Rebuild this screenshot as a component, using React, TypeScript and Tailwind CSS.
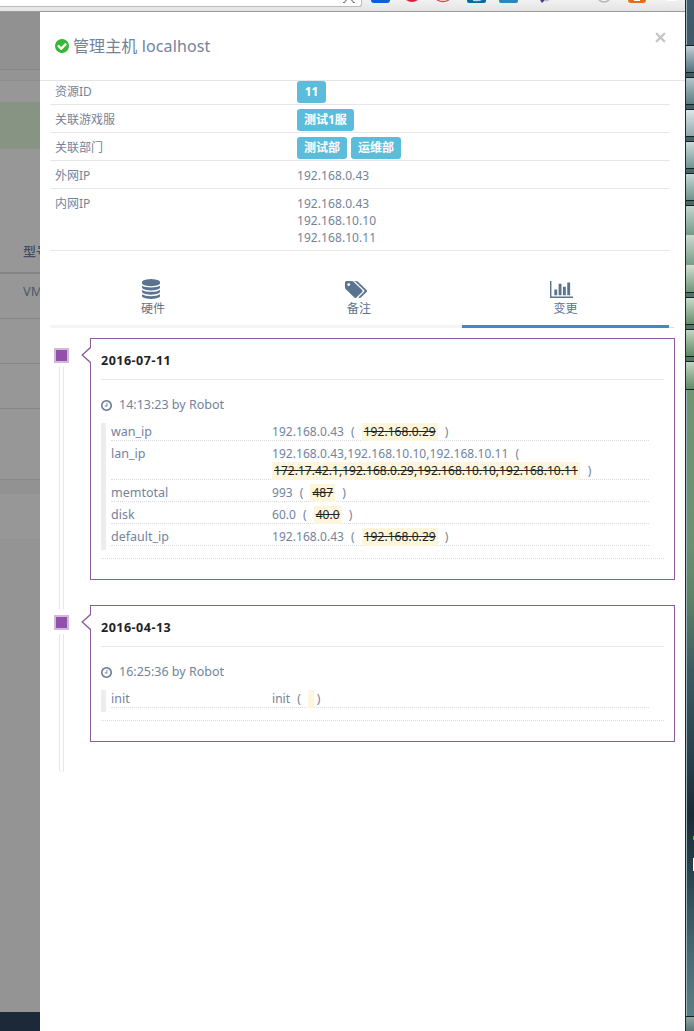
import type { ReactNode } from 'react';

const CIRCLE =
  'M1536 896q0 209-103 385.5t-279.5 279.5-385.5 103-385.5-103-279.5-279.5-103-385.5 103-385.5 279.5-279.5 385.5-103 385.5 103 279.5 279.5 103 385.5z';

function CheckIcon() {
  return (
    <svg viewBox="0 128 1536 1536" className="h-[14px] w-[14px] shrink-0 fill-[#35b935]">
      <path
        fillRule="evenodd"
        d={`${CIRCLE}M1284 734q0-28-18-46l-91-90q-19-19-45-19t-45 19l-408 407-226-226q-19-19-45-19t-45 19l-91 90q-18 18-18 46 0 27 18 45l362 362q19 19 45 19 27 0 46-19l543-543q18-18 18-45z`}
      />
    </svg>
  );
}

function ClockIcon() {
  return (
    <svg viewBox="0 128 1536 1536" className="-mt-px h-[11px] w-[11px] shrink-0 fill-[#6c7f95]">
      <path d="M896 544v448q0 14-9 23t-23 9h-320q-14 0-23-9t-9-23v-64q0-14 9-23t23-9h224v-352q0-14 9-23t23-9h64q14 0 23 9t9 23zm416 352q0-148-73-273t-198-198-273-73-273 73-198 198-73 273 73 273 198 198 273 73 273-73 198-198 73-273zm224 0q0 209-103 385.5t-279.5 279.5-385.5 103-385.5-103-279.5-279.5-103-385.5 103-385.5 279.5-279.5 385.5-103 385.5 103 279.5 279.5 103 385.5z" />
    </svg>
  );
}

const DISC = 'q237 0 443-43t325-127v170q0 69-103 128t-280 93.5-385 34.5-385-34.5-280-93.5-103-128v-170q119 84 325 127t443 43z';

function DatabaseIcon() {
  return (
    <svg viewBox="0 0 1536 1792" preserveAspectRatio="none" className="h-5 w-[18px] fill-[#5a738e]">
      <path
        d={`M768 768${DISC}M768 1536${DISC}M768 1152${DISC}M768 0q208 0 385 34.5t280 93.5 103 128v128q0 69-103 128t-280 93.5-385 34.5-385-34.5-280-93.5-103-128v-128q0-69 103-128t280-93.5 385-34.5z`}
      />
    </svg>
  );
}

function TagsIcon() {
  return (
    <svg viewBox="0 128 1899 1515" preserveAspectRatio="none" className="mr-[2px] h-[17px] w-[22px] fill-[#5a738e]">
      <path d="M448 448q0-53-37.5-90.5t-90.5-37.5-90.5 37.5-37.5 90.5 37.5 90.5 90.5 37.5 90.5-37.5 37.5-90.5zm1067 576q0 53-37 90l-491 492q-39 37-91 37-53 0-90-37l-715-716q-38-37-64.5-101t-26.5-117v-416q0-52 38-90t90-38h416q53 0 117 26.5t102 64.5l715 714q37 39 37 91zm384 0q0 53-37 90l-491 492q-39 37-91 37-36 0-59-14t-53-45l470-470q37-37 37-90 0-52-37-91l-715-714q-38-38-102-64.5t-117-26.5h224q53 0 117 26.5t102 64.5l715 714q37 39 37 91z" />
    </svg>
  );
}

function ChartIcon() {
  return (
    <svg viewBox="0 128 2048 1536" preserveAspectRatio="none" className="mr-[3px] h-[17px] w-[23px] fill-[#5a738e]">
      <path d="M640 896v512h-256v-512h256zm384-512v1024h-256v-1024h256zm1024 1152v128h-2048v-1536h128v1408h1920zm-640-896v768h-256v-768h256zm384-384v1152h-256v-1152h256z" />
    </svg>
  );
}

function Toolbar() {
  return (
    <div className="flex h-3 shrink-0 items-start border-b border-[#9b9b9b] bg-gradient-to-b from-[#f1f1f1] to-[#e4e4e4]">
      <div className="flex h-[7px] w-[362px] shrink-0 justify-end rounded-br-[3px] border-r border-b border-[#b9b9b9] bg-white pr-[5px]">
        <svg viewBox="0 0 14 3" className="h-[3px] w-[14px] fill-none stroke-[#777]">
          <path d="M1 2.5h2V1l2-1M9 0l2 1v1.500h2" />
        </svg>
      </div>
      <svg viewBox="362 0 323 5" className="h-[5px] w-[323px]">
        <path d="M371 0h19q0 3-3 3h-13q-3 0-3-3z" fill="#0b5fd8" />
        <path d="M406 0h12q-6 4-12 0z" fill="#dc1f35" />
        <path d="M437 0q6 3 12 0" fill="none" stroke="#e5484f" strokeWidth="1.3" />
        <path d="M467 0h19v1q0 2-2 2h-15q-2 0-2-2z" fill="#0b6aa0" />
        <path d="M473 0h9q-3 2-9 1z" fill="#a9dcf0" />
        <path d="M499 0h19v1q0 2-2 2h-15q-2 0-2-2z" fill="#2b86c4" />
        <path d="M540 0h5l-3 3z" fill="#4c3c88" />
        <path d="M545 0h5l-4 2z" fill="#bcbcc4" />
        <path d="M599 0q5 4 10 0" fill="none" stroke="#b5b5b5" strokeWidth="1.6" />
        <path d="M628 0h18q0 3-3 3h-12q-3 0-3-3z" fill="#f26a0e" />
        <path d="M634 0h6v1h-6z" fill="#fff" />
        <path d="M667 0h9v1h-9z" fill="#fff" />
      </svg>
    </div>
  );
}

function Backdrop() {
  return (
    <div className="flex w-10 shrink-0 flex-col overflow-hidden bg-[#979797] text-[13px] whitespace-nowrap text-[#505868]">
      <div className="h-[58px] shrink-0 border-b border-[#858585] bg-[#919191]" />
      <div className="h-[11px] shrink-0 border-b border-[#8c8c8c] bg-[#949494]" />
      <div className="h-[21px] shrink-0" />
      <div className="h-[47px] shrink-0 bg-[#889483]" />
      <div className="flex h-[125px] shrink-0 items-end border-b-2 border-[#858585] pb-3 pl-[23px] leading-[18px] font-medium text-[#434b5c]">型号</div>
      <div className="h-[45px] shrink-0 border-b border-[#858585] pt-2 pl-[23px] leading-[18px]">VM</div>
      <div className="h-[45px] shrink-0 border-b border-[#858585]" />
      <div className="h-[45px] shrink-0 border-b border-[#858585]" />
      <div className="h-[71px] shrink-0 border-b border-[#898989]" />
      <div className="h-[14px] shrink-0 bg-[#929292]" />
      <div className="h-[46px] shrink-0 border-b border-[#929292]" />
      <div className="grow bg-[#949494]" />
      <div className="h-[19px] shrink-0 bg-[#1c2938]" />
    </div>
  );
}

function Badge({ children }: { children: ReactNode }) {
  return (
    <span className="flex h-[22px] min-w-[29px] items-center justify-center rounded-[3px] bg-[#5bbcdb] px-[7px] pb-[2px] text-[12px] font-bold text-white">
      {children}
    </span>
  );
}

function InfoRow({ label, size, values, badges }: { label: string; size: string; values?: string[]; badges?: string[] }) {
  return (
    <div className={`flex shrink-0 border-b border-[#e4e6ea] pl-[5px] leading-[17px] ${size}`}>
      <div className={`w-[242px] ${badges ? 'pt-[2px]' : ''}`}>{label}</div>
      {badges ? (
        <div className="flex gap-1">
          {badges.map((b) => (
            <Badge key={b}>{b}</Badge>
          ))}
        </div>
      ) : (
        <div className="tracking-[0.07px]">
          {values?.map((v) => (
            <div key={v}>{v}</div>
          ))}
        </div>
      )}
    </div>
  );
}

function Tab({ icon, label, active }: { icon: ReactNode; label: string; active?: boolean }) {
  return (
    <div
      className={`flex h-[77px] flex-col items-center border-b-[3px] pt-7 text-[#5a738e] ${
        active ? 'w-[207px] border-[#3b8bd4]' : 'w-[206px] border-[#f5f5f5]'
      }`}
    >
      <div className="flex h-5 items-center pr-[5px]">{icon}</div>
      <div className="leading-[20px]">{label}</div>
    </div>
  );
}

interface Change {
  name: string;
  now: string;
  old: string;
}

function ChangeRow({ name, now, old }: Change) {
  const wraps = old.length > 30;
  const mark = (
    <del className={`h-[18px] bg-[#fdf6dd] text-[#222] ${old ? 'px-[2px]' : 'w-[6px]'} ${wraps ? 'tracking-[0.03px]' : ''}`}>{old}</del>
  );
  return (
    <div className={`flex border-b border-dotted border-[#d9dbe0] leading-[17px] ${wraps ? 'h-[39px]' : 'h-[22px]'}`}>
      <div className="w-[161px] pt-[4px] text-[12.5px]">{name}</div>
      <div className="pt-[4px] whitespace-nowrap">
        <div className="flex tracking-[0.05px]">
          {now}
          <span className="ml-[7px] text-[12px]">(</span>
          {!wraps && <span className={old ? 'ml-[7px] flex' : 'ml-[7px] flex'}>{mark}</span>}
          {!wraps && <span className={old ? 'ml-[7px] text-[12px]' : 'ml-[3px] text-[12px]'}>)</span>}
        </div>
        {wraps && (
          <div className="flex">
            {mark}
            <span className="ml-[8px] text-[12px]">)</span>
          </div>
        )}
      </div>
    </div>
  );
}

function Entry({ date, time, changes, first }: { date: string; time: string; changes: Change[]; first?: boolean }) {
  return (
    <div className="flex">
      <div className="flex w-[50px] shrink-0 flex-col pt-[10px] pl-[14px]">
        <div className="h-[15px] w-[15px] shrink-0 border-2 border-[#cfbad8] bg-[#9250ad]" />
        <div
          className={`mt-1 ml-[5px] w-[5px] shrink-0 border-x border-[#e6e7ea] ${first ? '-mb-1 h-[242px]' : 'h-[138px] rounded-b-[3px]'}`}
        />
      </div>
      <div className={`relative w-[585px] border border-[#8a5a9c] px-[10px] ${first ? 'h-[242px]' : 'h-[137px]'}`}>
        <svg viewBox="0 0 10 18" className="absolute top-[7px] -left-[10px] h-[18px] w-[10px]">
          <path d="M10 1L1.2 9L10 17" fill="#fff" stroke="#8a5a9c" strokeWidth="1.3" />
        </svg>
        <div className="h-[41px] w-[563px] border-b border-[#e6e7ea] pt-[13px] text-[12.5px] leading-[17px] font-bold tracking-[0.5px] text-[#222]">{date}</div>
        <div className="flex h-[43px] items-center pt-[8px] text-[12.5px]">
          <ClockIcon />
          <span className="ml-[7px]">{time}</span>
        </div>
        <div className="w-[563px] border-b border-dotted border-[#d9dbe0] pb-[8px]">
          <div className="flow-root border-l-[5px] border-[#ededef] pb-1">
            <div className="-mt-1 ml-[5px] w-[538px]">
              {changes.map((c) => (
                <ChangeRow key={c.name} {...c} />
              ))}
            </div>
          </div>
        </div>
      </div>
    </div>
  );
}

function Panel() {
  return (
    <div className="flex w-[645px] shrink-0 flex-col bg-white text-[12px] text-[#73839b]">
      <div className="flex h-[69px] shrink-0 justify-between border-b border-[#e5e5e5] pl-[15px]">
        <div className="flex h-[68px] items-center gap-[4px] text-[16px] tracking-[0.12px]">
          <CheckIcon />
          <span>管理主机 localhost</span>
        </div>
        <svg viewBox="0 0 10 10" className="mt-[20px] mr-[19px] h-[11px] w-[11px] stroke-[#c6c6c6] stroke-2">
          <path d="M1 1L9 9M9 1L1 9" />
        </svg>
      </div>
      <div className="flex w-[630px] shrink-0 flex-col pl-[10px]">
        <InfoRow label="资源ID" size="h-6" badges={['11']} />
        <InfoRow label="关联游戏服" size="h-7 pt-[4px]" badges={['测试1服']} />
        <InfoRow label="关联部门" size="h-7 pt-[4px]" badges={['测试部', '运维部']} />
        <InfoRow label="外网IP" size="h-7 pt-[6px]" values={['192.168.0.43']} />
        <InfoRow label="内网IP" size="h-[62px] pt-[6px]" values={['192.168.0.43', '192.168.10.10', '192.168.10.11']} />
      </div>
      <div className="flex shrink-0 pl-[10px]">
        <Tab icon={<DatabaseIcon />} label="硬件" />
        <Tab icon={<TagsIcon />} label="备注" />
        <Tab icon={<ChartIcon />} label="变更" active />
        <div className="h-[77px] w-[5px] border-b border-[#d5e0ec]" />
      </div>
      <div className="flex flex-col pt-[10px]">
        <Entry
          first
          date="2016-07-11"
          time="14:13:23 by Robot"
          changes={[
            { name: 'wan_ip', now: '192.168.0.43', old: '192.168.0.29' },
            { name: 'lan_ip', now: '192.168.0.43,192.168.10.10,192.168.10.11', old: '172.17.42.1,192.168.0.29,192.168.10.10,192.168.10.11' },
            { name: 'memtotal', now: '993', old: '487' },
            { name: 'disk', now: '60.0', old: '40.0' },
            { name: 'default_ip', now: '192.168.0.43', old: '192.168.0.29' },
          ]}
        />
        <Entry date="2016-04-13" time="16:25:36 by Robot" changes={[{ name: 'init', now: 'init', old: '' }]} />
      </div>
    </div>
  );
}

const TILES = [
  'h-[28px] mb-[4px] from-[#c3d0d6] to-[#52717f] border-y',
  'h-[28px] mb-[4px] from-[#b4c6ca] to-[#5b7e84] border-y',
  'h-[28px] mb-[4px] from-[#dde6e9] to-[#91aaae] border-y',
  'h-[28px] mb-[4px] from-[#cddcda] to-[#6f9694] border-y',
  'h-[28px] mb-[4px] from-[#c8d9d6] to-[#6d948c] border-y',
  'h-[30px] from-[#c5d6cf] to-[#759a89] border-t',
  'h-[30px] from-[#cbdacf] to-[#789c87]',
  'h-[28px] mb-[4px] from-[#d2dfd3] to-[#6f9678] border-b',
  'h-[28px] mb-[4px] from-[#cadaca] to-[#668f6b] border-y',
  'h-[28px] mb-[4px] from-[#c3d6c5] to-[#5f8966] border-y',
  'h-[29px] from-[#c3d6c5] to-[#638a66] border-y',
];

function Desktop() {
  return (
    <div className="flex w-[9px] shrink-0 flex-col border-l border-[#1c2a33] bg-gradient-to-b from-[#3c5668] via-[#5f8769] to-[#56787e]">
      <div className="h-[45px] shrink-0 border-l border-[#9fb2ba] bg-gradient-to-b from-[#415d6f] to-[#415867]" />
      {TILES.map((t, i) => (
        <div key={i} className={`shrink-0 border-[#14211f] bg-gradient-to-b ${t}`} />
      ))}
      <div className="flex grow flex-col border-l border-[#9fb2ba] bg-[linear-gradient(to_bottom,#6f9571_0%,#6b9070_25%,#5b8064_34%,#3c5960_45%,#253d49_60%,#192b35_68%,#24404a_76%,#4d6e78_92%,#597d82_100%)] pt-[446px]">
        <div className="ml-auto h-[4px] w-px bg-[#55c535]" />
        <div className="mt-[18px] ml-auto h-[13px] w-px bg-white" />
      </div>
      <div className="h-[15px] shrink-0 border-t border-[#14211f] bg-gradient-to-b from-[#91a5a5] to-[#5a7776]" />
    </div>
  );
}

export default function App() {
  return (
    <div className="flex h-[1031px] w-[694px] overflow-hidden bg-white font-['Noto_Sans','Noto_Sans_CJK_SC',sans-serif]">
      <div className="flex w-[685px] shrink-0 flex-col">
        <Toolbar />
        <div className="flex min-h-0 grow">
          <Backdrop />
          <Panel />
        </div>
      </div>
      <Desktop />
    </div>
  );
}
